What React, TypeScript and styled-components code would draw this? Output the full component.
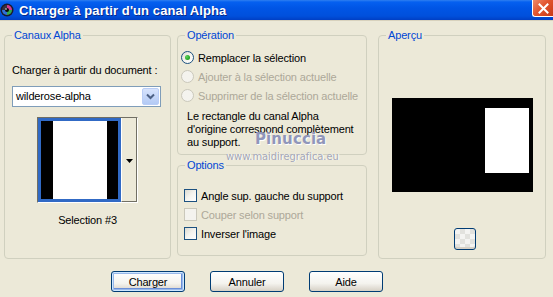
import React from "react";
import styled, { createGlobalStyle } from "styled-components";

const Global = createGlobalStyle`
  html, body { margin: 0; padding: 0; background: #ECE9D8; }
  #root { width: 553px; height: 297px; }
`;

const Window = styled.div`
  position: relative;
  width: 553px;
  height: 297px;
  overflow: hidden;
  background: #ECE9D8;
  display: flex;
  flex-direction: column;
  font-family: Tahoma, "Liberation Sans", Arial, sans-serif;
  font-size: 11px;
  letter-spacing: -0.15px;
  color: #000;
`;

const TitleBar = styled.div`
  height: 20px;
  flex: none;
  display: flex;
  align-items: center;
  background: linear-gradient(#2F7FF0 0, #0560F0 2px, #0055E5 40%, #0050DC 80%, #003FC4 100%);
  border-bottom: 1px solid #D8D2BD;
  position: relative;
`;

const TitleIcon = styled.svg`
  width: 14px;
  height: 14px;
  margin: 0 5px 0 0;
  flex: none;
`;

const TitleText = styled.div`
  color: #fff;
  font-family: "Liberation Sans", Arial, sans-serif;
  font-weight: bold;
  font-size: 13px;
  letter-spacing: 0.1px;
  text-shadow: 1px 1px 0 #0A2A8A;
  white-space: nowrap;
`;

const CloseButton = styled.div`
  position: absolute;
  right: 0;
  top: 0;
  width: 21px;
  height: 17px;
  box-sizing: border-box;
  background: linear-gradient(135deg, #F08A6A 0%, #E2552F 45%, #C83A16 100%);
  border: 1px solid #fff;
  border-top: none;
  border-right: none;
  border-radius: 0 0 0 3px;
  display: flex;
  align-items: center;
  justify-content: center;
`;

const Main = styled.div`
  display: flex;
  align-items: flex-start;
  padding: 8px 0 0 4px;
`;

const Group = styled.fieldset<{ $w: number; $h: number }>`
  margin: 0;
  box-sizing: border-box;
  width: ${(p) => p.$w}px;
  height: ${(p) => p.$h}px;
  border: 1px solid #D0D0BF;
  border-radius: 4px;
  padding: 0 7px 0 7px;
  min-width: 0;
`;

const Legend = styled.legend`
  color: #0046D5;
  padding: 0 2px;
  margin-left: 0;
  line-height: 13px;
  font-size: 11px;
`;

const Column = styled.div<{ $ml: number }>`
  display: flex;
  flex-direction: column;
  gap: 4px;
  margin-left: ${(p) => p.$ml}px;
`;

const Label = styled.div<{ $mt?: number }>`
  line-height: 13px;
  margin-top: ${(p) => p.$mt ?? 0}px;
  white-space: nowrap;
`;

const Select = styled.div`
  margin-top: 9px;
  width: 149px;
  height: 21px;
  box-sizing: border-box;
  background: #fff;
  border: 1px solid #7F9DB9;
  display: flex;
  align-items: center;
  padding-left: 3px;
`;

const SelectText = styled.span`
  flex: 1;
  line-height: 13px;
`;

const SelectArrow = styled.div`
  width: 17px;
  height: 17px;
  margin-right: 1px;
  box-sizing: border-box;
  border-radius: 2px;
  background: linear-gradient(#D7E3FC, #B3CAF5);
  border: 1px solid #B9CDF6;
  display: flex;
  align-items: center;
  justify-content: center;
`;

const Thumb = styled.div`
  margin: 10px 0 0 25px;
  width: 101px;
  height: 86px;
  box-sizing: border-box;
  display: flex;
  border-top: 1px solid #716F64;
  border-left: 1px solid #716F64;
  border-bottom: 1px solid #FFFFFF;
  border-right: 1px solid #FFFFFF;
  background: #fff;
`;

const ThumbImage = styled.div`
  width: 83px;
  box-sizing: border-box;
  border: 3px solid #316AC5;
  background: #000;
  display: flex;
  justify-content: center;
`;

const ThumbWhite = styled.div`
  width: 54px;
  background: #fff;
`;

const ThumbButton = styled.div`
  flex: 1;
  box-sizing: border-box;
  background: #ECE9D8;
  border-left: 1px solid #fff;
  border-right: 1px solid #716F64;
  border-bottom: 1px solid #716F64;
  display: flex;
  align-items: center;
  justify-content: center;
  padding-top: 2px;
`;

const Caption = styled.div`
  margin-top: 11px;
  line-height: 13px;
  text-align: center;
  width: 151px;
`;

const OptionRow = styled.div<{ $disabled?: boolean }>`
  height: 19px;
  display: flex;
  align-items: center;
  gap: 4px;
  color: ${(p) => (p.$disabled ? "#ACA899" : "#000")};
  white-space: nowrap;
`;

const RadioBox = styled.div<{ $disabled?: boolean }>`
  width: 13px;
  height: 13px;
  box-sizing: border-box;
  border-radius: 50%;
  border: 1px solid ${(p) => (p.$disabled ? "#CAC8BB" : "#1C5180")};
  background: ${(p) =>
    p.$disabled ? "#F4F3EE" : "linear-gradient(135deg, #DCDBD2 0%, #F5F4EF 50%, #FFFFFF 100%)"};
  display: flex;
  align-items: center;
  justify-content: center;
  flex: none;
`;

const RadioDot = styled.div`
  width: 5px;
  height: 5px;
  border-radius: 50%;
  background: radial-gradient(circle at 35% 35%, #5CD35C, #21A121 70%);
`;

const CheckBox = styled.div<{ $disabled?: boolean }>`
  width: 13px;
  height: 13px;
  box-sizing: border-box;
  border: 1px solid ${(p) => (p.$disabled ? "#CAC8BB" : "#1C5180")};
  background: ${(p) =>
    p.$disabled ? "#F4F3EE" : "linear-gradient(135deg, #DCDBD2 0%, #F5F4EF 50%, #FFFFFF 100%)"};
  flex: none;
`;

const RadioList = styled.div`
  margin: 6px 0 0 -4px;
  display: flex;
  flex-direction: column;
`;

const CheckList = styled.div`
  margin: 14px 0 0 -1px;
  display: flex;
  flex-direction: column;
`;

const Description = styled.div`
  margin: 5px 0 0 2px;
  line-height: 13px;
`;

const Preview = styled.div`
  margin: 56px 0 0 6px;
  width: 141px;
  height: 94px;
  background: #000;
  display: flex;
  justify-content: flex-end;
  padding: 10px 4px 0 0;
  box-sizing: border-box;
`;

const PreviewWhite = styled.div`
  width: 44px;
  height: 65px;
  background: #fff;
`;

const SmallButton = styled.div`
  margin: 36px 0 0 68px;
  width: 22px;
  height: 22px;
  box-sizing: border-box;
  border: 1px solid #003C74;
  border-radius: 3px;
  background-color: #F4F4F2;
  background-image:
    linear-gradient(45deg, #E2E2DE 25%, transparent 25%, transparent 75%, #E2E2DE 75%),
    linear-gradient(45deg, #E2E2DE 25%, transparent 25%, transparent 75%, #E2E2DE 75%);
  background-size: 10px 10px;
  background-position: 0 0, 5px 5px;
  box-shadow: inset 0 -2px 0 #D6D0C5;
`;

const ButtonRow = styled.div`
  display: flex;
  gap: 25px;
  padding: 12px 0 0 111px;
`;

const Button = styled.div<{ $default?: boolean }>`
  width: 74px;
  height: 21px;
  box-sizing: border-box;
  border: 1px solid #003C74;
  border-radius: 3px;
  background: linear-gradient(#FFFFFF 0%, #F4F3EE 60%, #D6D0C5 100%);
  display: flex;
  align-items: center;
  justify-content: center;
  box-shadow: ${(p) =>
    p.$default ? "inset 0 0 0 1px #CEE7FF, inset 0 0 0 2px #98B8EA, inset -1px -1px 0 2px #6A8FD8" : "none"};
`;

const Watermark = styled.div`
  position: absolute;
  left: 226px;
  top: 129px;
  display: flex;
  flex-direction: column;
  align-items: flex-start;
  pointer-events: none;
  font-family: "DejaVu Sans", Verdana, sans-serif;
  letter-spacing: 0;
`;

const WatermarkName = styled.div`
  margin-left: 29px;
  font-size: 15px;
  font-weight: bold;
  line-height: 20px;
  letter-spacing: 0.1px;
  color: #9096BA;
  text-shadow: 1px 1px 0 #fff;
`;

const WatermarkUrl = styled.div`
  margin-top: 2px;
  font-size: 10px;
  line-height: 12px;
  letter-spacing: -0.1px;
  color: #A4A7B6;
  text-shadow: 1px 0 0 #fff;
`;

export default function App() {
  return (
    <Window>
      <Global />
      <TitleBar>
        <TitleIcon viewBox="0 0 14 14">
          <circle cx="7" cy="7" r="6.5" fill="#1A1A2A" />
          <circle cx="7" cy="7" r="5" fill="#3A3040" />
          <path d="M7 2 A5 5 0 0 1 12 7 L7 7 Z" fill="#D23A8C" />
          <path d="M12 7 A5 5 0 0 1 7 12 L7 7 Z" fill="#2FA84F" />
          <path d="M7 12 A5 5 0 0 1 2 7 L7 7 Z" fill="#2E6FD8" />
          <circle cx="7" cy="7" r="2" fill="#0A0A0A" />
          <circle cx="6" cy="6" r="0.8" fill="#fff" />
        </TitleIcon>
        <TitleText>Charger à partir d'un canal Alpha</TitleText>
        <CloseButton>
          <svg width="11" height="11" viewBox="0 0 11 11">
            <path d="M1.5 1.5 L9.5 9.5 M9.5 1.5 L1.5 9.5" stroke="#fff" strokeWidth="2" strokeLinecap="square" />
          </svg>
        </CloseButton>
      </TitleBar>

      <Main>
        <Group $w={167} $h={230}>
          <Legend>Canaux Alpha</Legend>
          <Label $mt={22}>Charger à partir du document :</Label>
          <Select>
            <SelectText>wilderose-alpha</SelectText>
            <SelectArrow>
              <svg width="9" height="7" viewBox="0 0 9 7">
                <path d="M1 1.5 L4.5 5 L8 1.5" stroke="#4D6185" strokeWidth="2" fill="none" />
              </svg>
            </SelectArrow>
          </Select>
          <Thumb>
            <ThumbImage>
              <ThumbWhite />
            </ThumbImage>
            <ThumbButton>
              <svg width="7" height="4" viewBox="0 0 7 4">
                <path d="M0 0 H7 L3.5 4 Z" fill="#000" />
              </svg>
            </ThumbButton>
          </Thumb>
          <Caption>Selection #3</Caption>
        </Group>

        <Column $ml={6}>
          <Group $w={190} $h={126}>
            <Legend>Opération</Legend>
            <RadioList>
              <OptionRow>
                <RadioBox>
                  <RadioDot />
                </RadioBox>
                Remplacer la sélection
              </OptionRow>
              <OptionRow $disabled>
                <RadioBox $disabled />
                Ajouter à la sélection actuelle
              </OptionRow>
              <OptionRow $disabled>
                <RadioBox $disabled />
                Supprimer de la sélection actuelle
              </OptionRow>
            </RadioList>
            <Description>
              Le rectangle du canal Alpha
              <br />
              d'origine correspond complètement
              <br />
              au support.
            </Description>
          </Group>
          <Group $w={190} $h={97}>
            <Legend>Options</Legend>
            <CheckList>
              <OptionRow>
                <CheckBox />
                Angle sup. gauche du support
              </OptionRow>
              <OptionRow $disabled>
                <CheckBox $disabled />
                Couper selon support
              </OptionRow>
              <OptionRow>
                <CheckBox />
                Inverser l'image
              </OptionRow>
            </CheckList>
          </Group>
        </Column>

        <Column $ml={11}>
          <Group $w={168} $h={230}>
            <Legend>Aperçu</Legend>
            <Preview>
              <PreviewWhite />
            </Preview>
            <SmallButton />
          </Group>
        </Column>
      </Main>

      <ButtonRow>
        <Button $default>Charger</Button>
        <Button>Annuler</Button>
        <Button>Aide</Button>
      </ButtonRow>

      <Watermark>
        <WatermarkName>Pinuccia</WatermarkName>
        <WatermarkUrl>www.maidiregrafica.eu</WatermarkUrl>
      </Watermark>
    </Window>
  );
}
